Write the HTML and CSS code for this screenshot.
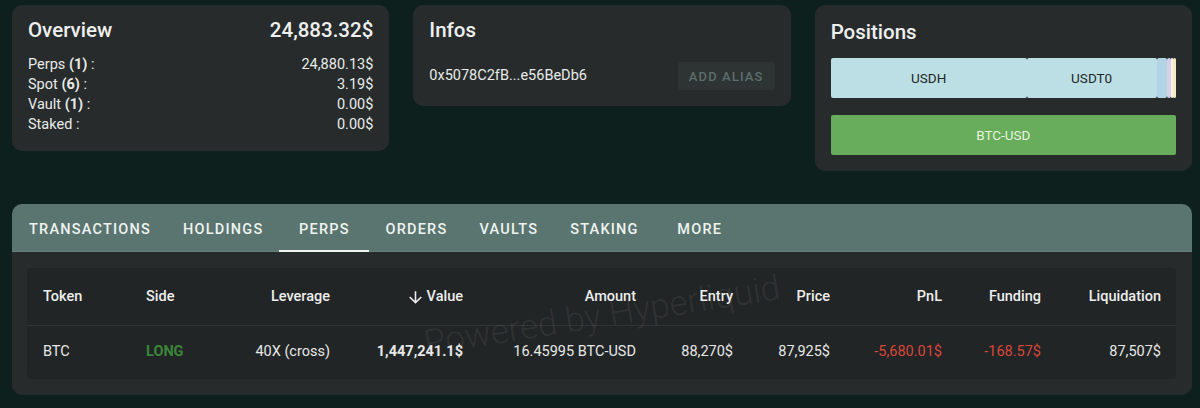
FILE: index.html
```html
<!DOCTYPE html>
<html lang="en">
<head>
<meta charset="utf-8">
<title>Wallet overview</title>
<link rel="stylesheet" href="styles.css">
</head>
<body>
<div class="page">
  <div class="top">
    <section class="card overview">
      <div class="ov-head"><span>Overview</span><span>24,883.32$</span></div>
      <div class="ov-rows">
        <div class="ov-row"><span>Perps <b>(1)</b> :</span><span>24,880.13$</span></div>
        <div class="ov-row"><span>Spot <b>(6)</b> :</span><span>3.19$</span></div>
        <div class="ov-row"><span>Vault <b>(1)</b> :</span><span>0.00$</span></div>
        <div class="ov-row"><span>Staked :</span><span>0.00$</span></div>
      </div>
    </section>
    <section class="card infos">
      <h2 class="card-title">Infos</h2>
      <div class="info-row">
        <span class="addr">0x5078C2fB...e56BeDb6</span>
        <button class="alias">ADD ALIAS</button>
      </div>
    </section>
    <section class="card positions">
      <h2 class="card-title pos-title">Positions</h2>
      <div class="bar stack">
        <div class="seg s-usdh" style="width:196px">USDH</div>
        <div class="seg s-usdt" style="width:130px">USDT0</div>
        <div class="seg s-a" style="width:10px"></div>
        <div class="seg s-b" style="width:4px"></div>
        <div class="seg s-c" style="width:2px"></div>
        <div class="seg s-d" style="width:3px"></div>
      </div>
      <div class="bar perp">BTC-USD</div>
    </section>
  </div>

  <section class="panel">
    <nav class="tabs">
      <span class="tab">TRANSACTIONS</span>
      <span class="tab">HOLDINGS</span>
      <span class="tab active">PERPS</span>
      <span class="tab">ORDERS</span>
      <span class="tab">VAULTS</span>
      <span class="tab">STAKING</span>
      <span class="tab">MORE</span>
    </nav>
    <div class="panel-body">
      <div class="table-wrap">
        <table class="perps">
          <colgroup>
            <col class="c-token"><col class="c-side"><col class="c-lev"><col class="c-value"><col class="c-amount">
            <col class="c-entry"><col class="c-price"><col class="c-pnl"><col class="c-fund"><col class="c-liq">
          </colgroup>
          <thead>
            <tr>
              <th class="l">Token</th>
              <th class="l">Side</th>
              <th>Leverage</th>
              <th><span class="sort"><svg class="arrow" viewBox="0 0 24 24"><path d="M20 12l-1.41-1.41L13 16.17V4h-2v12.17l-5.58-5.59L4 12l8 8 8-8z"/></svg><span>Value</span></span></th>
              <th>Amount</th>
              <th>Entry</th>
              <th>Price</th>
              <th>PnL</th>
              <th>Funding</th>
              <th>Liquidation</th>
            </tr>
          </thead>
          <tbody>
            <tr>
              <td class="l">BTC</td>
              <td class="l long">LONG</td>
              <td>40X (cross)</td>
              <td class="strong">1,447,241.1$</td>
              <td>16.45995 BTC-USD</td>
              <td>88,270$</td>
              <td>87,925$</td>
              <td class="neg">-5,680.01$</td>
              <td class="neg">-168.57$</td>
              <td>87,507$</td>
            </tr>
          </tbody>
        </table>
        <div class="watermark">Powered by Hyperliquid</div>
      </div>
    </div>
  </section>
</div>
</body>
</html>
```

FILE: styles.css
```css
* { box-sizing: border-box; }

html, body {
  margin: 0;
  background: #0d201e;
  font-family: Roboto, "Liberation Sans", sans-serif;
  color: #eef0ef;
}

.page {
  padding: 5px 8px 0 12px;
}

.top {
  display: grid;
  grid-template-columns: repeat(3, 1fr);
  column-gap: 24px;
  align-items: start;
}

.card {
  background: #272b2b;
  border-radius: 10px;
  padding: 12px 16px 16px;
}

.ov-head {
  display: flex;
  justify-content: space-between;
  font-size: 20.5px;
  font-weight: 500;
  line-height: 24px;
  padding-top: 1px;
}

.ov-rows {
  margin-top: 13px;
}

.ov-row {
  display: flex;
  justify-content: space-between;
  font-size: 14.5px;
  line-height: 20px;
  color: #e8ebea;
}

.ov-row b { font-weight: 700; }

.card-title {
  margin: 0;
  font-size: 20.5px;
  font-weight: 500;
  line-height: 24px;
  padding-top: 1px;
}

.info-row {
  margin-top: 20px;
  display: flex;
  justify-content: space-between;
  align-items: center;
}

.addr {
  font-size: 14.5px;
  line-height: 20px;
  color: #e8ebea;
}

.alias {
  height: 28px;
  width: 97px;
  border: 0;
  border-radius: 3px;
  background: #2e3433;
  color: #5c6e6b;
  font-family: inherit;
  font-size: 13px;
  font-weight: 500;
  letter-spacing: 1.1px;
  padding: 0;
}

.pos-title {
  margin-top: 2px;
}

.bar {
  height: 40px;
  border-radius: 2px;
  font-size: 13.5px;
}

.stack {
  margin-top: 14px;
  display: flex;
}

.seg {
  height: 40px;
  border-radius: 2px;
  display: flex;
  align-items: center;
  justify-content: center;
  color: #1d2626;
  flex: none;
}

.s-usdh, .s-usdt { background: #bcdfe5; }
.s-a { background: #b3d3e6; }
.s-b { background: #d6cfe6; }
.s-c { background: #f2f2f2; }
.s-d { background: #f4eabd; }

.perp {
  margin-top: 17px;
  background: #67ad5b;
  color: #e6f4df;
  display: flex;
  align-items: center;
  justify-content: center;
}

.panel {
  margin-top: 33px;
  background: #272b2b;
  border-radius: 10px;
  overflow: hidden;
}

.tabs {
  display: flex;
  height: 48px;
  background: #5a7570;
  border-bottom: 1px solid #66807b;
  padding-left: 1px;
}

.tab {
  position: relative;
  min-width: 90px;
  padding: 3px 16px 0;
  display: flex;
  align-items: center;
  justify-content: center;
  font-size: 14.5px;
  font-weight: 500;
  letter-spacing: 1.22px;
  color: #eef3f0;
}

.tab.active::after {
  content: "";
  position: absolute;
  left: 0;
  right: 0;
  bottom: -1px;
  height: 2px;
  background: #eef3f0;
}

.panel-body {
  padding: 16px 16px 16px 15px;
}

.table-wrap {
  position: relative;
  background: #222525;
  border-radius: 4px;
}

.perps {
  width: 100%;
  border-collapse: collapse;
  table-layout: fixed;
}

.c-token { width: 103px; }
.c-side { width: 100px; }
.c-lev { width: 116px; }
.c-value { width: 133px; }
.c-amount { width: 173px; }
.c-entry { width: 97px; }
.c-price { width: 97px; }
.c-pnl { width: 112px; }
.c-fund { width: 99px; }
.c-liq { width: 120px; }

.perps th, .perps td {
  padding: 16px;
  text-align: right;
  white-space: nowrap;
}

.perps th {
  height: 57px;
  padding-top: 17px;
  font-size: 14.5px;
  font-weight: 500;
  line-height: 24px;
  color: #eceeed;
  border-bottom: 1px solid #2f3434;
}

.perps td {
  height: 53px;
  font-size: 14.5px;
  line-height: 20px;
  color: #e6e8e7;
}

.perps .l { text-align: left; }

.sort {
  display: inline-flex;
  align-items: center;
  vertical-align: top;
  height: 24px;
}

.arrow {
  width: 19px;
  height: 19px;
  fill: #eceeed;
  margin-right: 2px;
}

.perps td.long {
  color: #3a8539;
  font-weight: 700;
}

.perps td.strong { font-weight: 700; }

.perps td.neg { color: #d8453c; }

.watermark {
  position: absolute;
  left: 575px;
  top: 48px;
  transform: translate(-50%, -50%) rotate(-9deg);
  font-size: 35px;
  font-weight: 300;
  line-height: 40px;
  color: rgba(255, 255, 255, 0.07);
  white-space: nowrap;
  pointer-events: none;
}
```
